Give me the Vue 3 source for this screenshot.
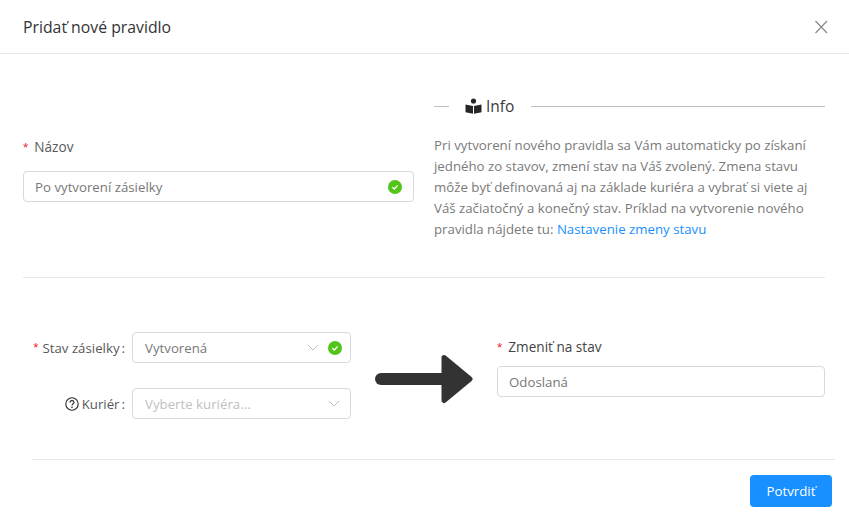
<script setup>
const infoText = 'Pri vytvorení nového pravidla sa Vám automaticky po získaní jedného zo stavov, zmení stav na Váš zvolený. Zmena stavu môže byť definovaná aj na základe kuriéra a vybrať si viete aj Váš začiatočný a konečný stav. Príklad na vytvorenie nového pravidla nájdete tu: '
</script>

<template>
  <div class="modal">
    <header class="modal-header">
      <span class="title">Pridať nové pravidlo</span>
      <svg class="close" viewBox="0 0 14 14" width="14" height="14">
        <path d="M1.5 1 L13 13 M13 1 L1.5 13" stroke="#8c8c8c" stroke-width="1.3" fill="none" />
      </svg>
    </header>

    <section class="top-row">
      <div class="name-col">
        <label class="label"><span class="req">*</span>Názov</label>
        <div class="input has-icon">
          <span>Po vytvorení zásielky</span>
          <svg class="ok" viewBox="0 0 14 14" width="14" height="14">
            <circle cx="7" cy="7" r="7" fill="#52c41a" />
            <path d="M4.4 7.2 L6.3 9 L9.7 5.4" stroke="#fff" stroke-width="1.3" fill="none" />
          </svg>
        </div>
      </div>
      <div class="info-col">
        <div class="divider">
          <i class="line short"></i>
          <span class="divider-text">
            <svg viewBox="0 0 17 16" width="17" height="16">
              <circle cx="8.5" cy="3" r="2.6" fill="#262626" />
              <path d="M0.5 6.5 L8 8 V15.8 L0.5 14.3 Z M16.5 6.5 L9 8 V15.8 L16.5 14.3 Z" fill="#262626" />
            </svg>
            Info
          </span>
          <i class="line"></i>
        </div>
        <p class="info">{{ infoText }}<a>Nastavenie zmeny stavu</a></p>
      </div>
    </section>

    <hr class="sep" />

    <section class="rule-row">
      <div class="rule-left">
        <div class="inline-item">
          <label class="inline-label"><span class="req">*</span>Stav zásielky<em>:</em></label>
          <div class="input select">
            <span>Vytvorená</span>
            <svg class="chev" viewBox="0 0 12 7" width="12" height="7">
              <path d="M0.8 0.8 L6 6 L11.2 0.8" stroke="#bfbfbf" stroke-width="1" fill="none" />
            </svg>
            <svg class="ok" viewBox="0 0 14 14" width="14" height="14">
              <circle cx="7" cy="7" r="7" fill="#52c41a" />
              <path d="M4.4 7.2 L6.3 9 L9.7 5.4" stroke="#fff" stroke-width="1.3" fill="none" />
            </svg>
          </div>
        </div>
        <div class="inline-item">
          <label class="inline-label">
            <svg class="help" viewBox="0 0 14 14" width="14" height="14">
              <circle cx="7" cy="7" r="6.2" stroke="#262626" stroke-width="1.1" fill="none" />
              <path d="M5 5.6 C5 4.3 6 3.6 7 3.6 C8.1 3.6 9 4.3 9 5.4 C9 6.8 7 6.8 7 8.4" stroke="#262626" stroke-width="1.1" fill="none" />
              <circle cx="7" cy="10.2" r="0.8" fill="#262626" />
            </svg>
            Kuriér<em>:</em>
          </label>
          <div class="input select">
            <span class="placeholder">Vyberte kuriéra...</span>
            <svg class="chev last" viewBox="0 0 12 7" width="12" height="7">
              <path d="M0.8 0.8 L6 6 L11.2 0.8" stroke="#bfbfbf" stroke-width="1" fill="none" />
            </svg>
          </div>
        </div>
      </div>

      <svg class="arrow" viewBox="0 0 98 50" width="98" height="50">
        <path d="M6 25 H67" stroke="#333" stroke-width="12" stroke-linecap="round" fill="none" />
        <path d="M69 3.5 L95 25 L69 46.5 Z" fill="#333" stroke="#333" stroke-width="5" stroke-linejoin="round" />
      </svg>

      <div class="rule-right">
        <label class="label"><span class="req">*</span>Zmeniť na stav</label>
        <div class="input"><span>Odoslaná</span></div>
      </div>
    </section>

    <footer class="modal-footer">
      <button class="primary">Potvrdiť</button>
    </footer>
  </div>
</template>

<style scoped>
.modal {
  width: 849px;
  height: 529px;
  box-sizing: border-box;
  background: #fff;
  font-family: "Open Sans", "Liberation Sans", sans-serif;
  font-size: 13.25px;
  color: #595959;
  overflow: hidden;
}

.modal-header {
  height: 54px;
  box-sizing: border-box;
  border-bottom: 1px solid #e8e8e8;
  padding: 0 21px 0 23px;
  display: flex;
  align-items: center;
  justify-content: space-between;
}

.title {
  font-size: 15.8px;
  font-weight: 500;
  color: #333;
}

.close {
  display: block;
}

.top-row {
  display: flex;
  gap: 20px;
  padding: 40px 24px 0 23px;
  height: 223px;
  box-sizing: border-box;
}

.name-col {
  width: 391px;
  padding-top: 41px;
}

.info-col {
  width: 391px;
}

.label {
  display: block;
  height: 24px;
  line-height: 24px;
  margin-bottom: 12px;
  font-size: 13.6px;
  color: #595959;
}

.rule-right .label {
  margin-bottom: 7px;
  color: #434343;
}

.req {
  color: #f5222d;
  margin-right: 6px;
  font-family: "Liberation Sans", sans-serif;
}

.input {
  height: 31px;
  box-sizing: border-box;
  border: 1px solid #d9d9d9;
  border-radius: 4px;
  padding: 0 11px;
  display: flex;
  align-items: center;
  color: #777;
  background: #fff;
}

.input span {
  flex: 1;
}

.ok {
  flex: none;
  display: block;
}

.divider {
  display: flex;
  align-items: center;
  height: 24px;
  margin-top: 0;
}

.line {
  flex: 1;
  height: 1px;
  background: #bfbfbf;
}

.line.short {
  flex: none;
  width: 15px;
}

.divider-text {
  display: flex;
  align-items: center;
  gap: 4px;
  padding: 0 17px 0 16px;
  font-size: 15.5px;
  color: #3a3a3a;
}

.info {
  margin: 17px 0 0;
  line-height: 21px;
  color: #7a7a7a;
}

.info a {
  color: #1890ff;
}

.sep {
  margin: 0 24px 0 23px;
  border: 0;
  border-top: 1px solid #e8e8e8;
}

.rule-row {
  display: flex;
  align-items: flex-start;
  height: 181px;
  box-sizing: border-box;
  padding-top: 54px;
}

.rule-left {
  width: 351px;
  display: flex;
  flex-direction: column;
  gap: 25px;
}

.inline-item {
  display: flex;
  align-items: center;
}

.inline-label {
  width: 132px;
  box-sizing: border-box;
  display: flex;
  align-items: center;
  justify-content: flex-end;
  color: #595959;
}

.inline-label .req {
  margin-right: 4px;
}

.inline-label .help {
  margin-right: 3px;
}

.inline-label em {
  font-style: normal;
  margin: 0 7px 0 2px;
}

.select {
  flex: 1;
  padding: 0 8px 0 12px;
}

.chev {
  flex: none;
  margin-right: 9px;
}

.chev.last {
  margin: 0 2px 0 0;
}

.placeholder {
  color: #bfbfbf;
}

.arrow {
  flex: none;
  margin: 22px 0 0 24px;
}

.rule-right {
  margin: 3px 0 0 24px;
  width: 328px;
}

.modal-footer {
  margin: 0 14px 0 32px;
  border-top: 1px solid #e8e8e8;
  padding-top: 15px;
  display: flex;
  justify-content: flex-end;
}

.primary {
  width: 82px;
  height: 32px;
  margin-right: 3px;
  border: 0;
  border-radius: 4px;
  background: #1890ff;
  color: #fff;
  font-family: inherit;
  font-size: 13.25px;
}
</style>

<style>
html, body {
  margin: 0;
  background: #fff;
}
</style>
